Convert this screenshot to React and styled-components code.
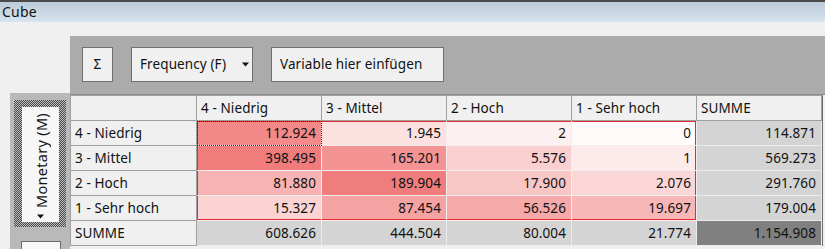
import React from 'react';
import styled, { createGlobalStyle } from 'styled-components';

const Global = createGlobalStyle`
  html, body { margin: 0; padding: 0; background: #f0f0f0; overflow: hidden; }
  body { font-family: "Noto Sans", "Open Sans", sans-serif; font-size: 13.5px; color: #111; }
  * { box-sizing: border-box; }
`;

const Window = styled.div`
  width: 825px;
  height: 249px;
  display: flex;
  flex-direction: column;
  background: #f0f0f0;
  overflow: hidden;
`;

const TitleBar = styled.div`
  flex: none;
  height: 22px;
  border-top: 2px solid #4a4a4a;
  background: linear-gradient(#bccbd9, #d8e4ef);
  padding-left: 2px;
  line-height: 19px;
  font-size: 14px;
  letter-spacing: 0.2px;
  color: #111;
`;

const Body = styled.div`
  flex: 1;
  display: flex;
  padding-top: 14px;
  min-height: 0;
`;

const LeftColumn = styled.div`
  width: 70px;
  flex: none;
  display: flex;
  flex-direction: column;
  padding-top: 57px;
`;

const SidePanel = styled.div`
  flex: 1;
  margin-left: 10px;
  background: #b9b9b9;
  padding: 7px 0 0 4px;
  display: flex;
  flex-direction: column;
`;

const DitherFrame = styled.div`
  flex: none;
  width: 52px;
  height: 127px;
  padding: 7px 7px 5px 8px;
  background: repeating-conic-gradient(#4a4a4a 0 25%, #bdbdbd 0 50%) 0 0 / 2px 2px;
`;

const VerticalButton = styled.div`
  width: 100%;
  height: 100%;
  background: #f7f7f7;
  display: flex;
  flex-direction: column;
  align-items: center;
  justify-content: flex-end;
  padding-bottom: 3px;
  gap: 6px;
`;

const VerticalLabel = styled.span`
  writing-mode: vertical-rl;
  transform: rotate(180deg);
  font-size: 14.5px;
  letter-spacing: 0.3px;
  line-height: 16px;
  white-space: nowrap;
`;

const SmallBox = styled.div`
  flex: none;
  margin-top: 14px;
  margin-left: 7px;
  width: 40px;
  height: 20px;
  background: #f7f7f7;
  border: 1px solid #6d6d6d;
`;

const Main = styled.div`
  flex: 1;
  display: flex;
  flex-direction: column;
  min-width: 0;
`;

const Toolbar = styled.div`
  flex: none;
  height: 59px;
  background: #ababab;
  border-bottom: 1px solid #8e8e8e;
  padding: 11px 12px;
  display: flex;
  gap: 18px;
  align-items: flex-start;
`;

const ToolButton = styled.div`
  height: 35px;
  width: ${p => p.$w}px;
  background: #f0f0f0;
  border: 1px solid #707070;
  display: flex;
  align-items: center;
  justify-content: ${p => (p.$center ? 'center' : 'flex-start')};
  padding: 0 ${p => (p.$center ? 0 : p.$padRight ?? 8)}px 1px ${p => (p.$center ? 0 : 8)}px;
  font-size: 13.5px;
  letter-spacing: 0.1px;
  color: #111;
  white-space: nowrap;
`;

const ButtonLabel = styled.span`
  flex: 1;
`;

const GridArea = styled.div`
  flex: 1;
  display: flex;
  background: #f0f0f0;
`;

const Grid = styled.div`
  display: grid;
  grid-template-columns: 126px repeat(5, 125px);
  grid-auto-rows: 25px;
  border-left: 1px solid #a0a0a0;
  border-top: 1px solid #a0a0a0;
  border-right: 1px solid #6d6d6d;
  align-self: flex-start;
`;

const SEL = '#e62a2e';

const Cell = styled.div`
  border-right: 1px solid ${p => p.$line || '#a0a0a0'};
  border-bottom: 1px solid ${p => p.$line || '#a0a0a0'};
  background: ${p => p.$bg || '#f0f0f0'};
  display: flex;
  align-items: center;
  justify-content: ${p => (p.$num ? 'flex-end' : 'flex-start')};
  padding: 0 ${p => (p.$num ? 5 : 4)}px 1px 4px;
  font-size: 13.5px;
  letter-spacing: 0.1px;
  color: #111;
  white-space: nowrap;
  outline: ${p => (p.$focus ? '1px dotted #222' : 'none')};
  outline-offset: -1px;
  box-shadow: ${p =>
    [
      p.$selTop && `inset 0 1px 0 ${SEL}`,
      p.$selBottom && `inset 0 -1px 0 ${SEL}`,
      p.$selLeft && `inset 1px 0 0 ${SEL}`,
      p.$selRight && `inset -1px 0 0 ${SEL}`,
    ]
      .filter(Boolean)
      .join(', ') || 'none'};
`;

const Caret = ({ size = 7 }) => (
  <svg width={size} height={Math.ceil(size / 2) + 1} viewBox="0 0 7 4" style={{ display: 'block', flex: 'none' }}>
    <path d="M0 0 H7 L3.5 4 Z" fill="#111" />
  </svg>
);

const columns = ['4 - Niedrig', '3 - Mittel', '2 - Hoch', '1 - Sehr hoch', 'SUMME'];

const rows = [
  { label: '4 - Niedrig', values: [['112.924', '#f38a8a'], ['1.945', '#fde1e1'], ['2', '#fdf0f0'], ['0', '#fffbfb']], sum: '114.871' },
  { label: '3 - Mittel', values: [['398.495', '#f07c7c'], ['165.201', '#f39393'], ['5.576', '#facfcf'], ['1', '#fdeaea']], sum: '569.273' },
  { label: '2 - Hoch', values: [['81.880', '#f7b3b3'], ['189.904', '#ef7d7d'], ['17.900', '#f9c6c6'], ['2.076', '#fad6d6']], sum: '291.760' },
  { label: '1 - Sehr hoch', values: [['15.327', '#fbd3d3'], ['87.454', '#f5a2a2'], ['56.526', '#f6a9a9'], ['19.697', '#f7b7b7']], sum: '179.004' },
];

const totals = ['608.626', '444.504', '80.004', '21.774'];

export default function App() {
  return (
    <Window>
      <Global />
      <TitleBar>Cube</TitleBar>
      <Body>
        <LeftColumn>
          <SidePanel>
            <DitherFrame>
              <VerticalButton>
                <VerticalLabel>Monetary (M)</VerticalLabel>
                <Caret />
              </VerticalButton>
            </DitherFrame>
            <SmallBox />
          </SidePanel>
        </LeftColumn>
        <Main>
          <Toolbar>
            <ToolButton $w={31} $center>Σ</ToolButton>
            <ToolButton $w={122} $padRight={3}>
              <ButtonLabel>Frequency (F)</ButtonLabel>
              <Caret />
            </ToolButton>
            <ToolButton $w={173}>Variable hier einfügen</ToolButton>
          </Toolbar>
          <GridArea>
            <Grid>
              <Cell />
              {columns.map(c => (
                <Cell key={c}>{c}</Cell>
              ))}
              {rows.map((r, ri) => (
                <React.Fragment key={r.label}>
                  <Cell>{r.label}</Cell>
                  {r.values.map(([v, bg], ci) => (
                    <Cell
                      key={ci}
                      $num
                      $bg={bg}
                      $line="#f3eded"
                      $focus={ri === 0 && ci === 0}
                      $selTop={ri === 0}
                      $selBottom={ri === rows.length - 1}
                      $selLeft={ci === 0}
                      $selRight={ci === r.values.length - 1}
                    >
                      {v}
                    </Cell>
                  ))}
                  <Cell $num $bg="#d4d4d4" $line="#ececec">{r.sum}</Cell>
                </React.Fragment>
              ))}
              <Cell>SUMME</Cell>
              {totals.map(t => (
                <Cell key={t} $num $bg="#d4d4d4" $line="#ececec">{t}</Cell>
              ))}
              <Cell $num $bg="#808080" $line="#ececec">1.154.908</Cell>
            </Grid>
          </GridArea>
        </Main>
      </Body>
    </Window>
  );
}
